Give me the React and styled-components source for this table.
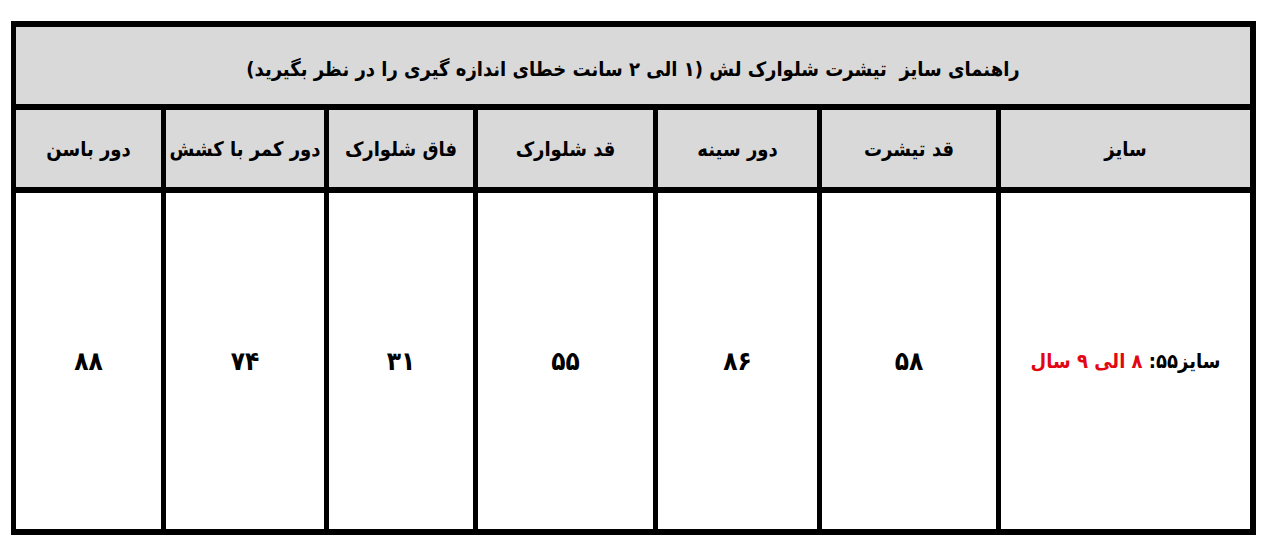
import React from "react";
import styled, { createGlobalStyle } from "styled-components";

const GlobalStyle = createGlobalStyle`
  html, body {
    margin: 0;
    padding: 0;
    background: #fff;
  }
  body {
    font-family: "DejaVu Sans Condensed", "DejaVu Sans", sans-serif;
    font-stretch: condensed;
  }
`;

const Page = styled.div`
  padding: 21px 0 0 11px;
`;

const SizeTable = styled.div`
  direction: rtl;
  display: grid;
  grid-template-columns: 249px 174px 159px 175px 144px 158px 145px;
  grid-template-rows: 77px 77px 336px;
  column-gap: 5px;
  row-gap: 6px;
  padding: 6px 6px 6px 5px;
  width: max-content;
  background: #000;
`;

const Cell = styled.div`
  display: flex;
  align-items: center;
  justify-content: center;
  overflow: hidden;
  background: ${({ $head }) => ($head ? "#d9d9d9" : "#fff")};
  color: #000;
  font-weight: 700;
  font-size: ${({ $num }) => ($num ? "26px" : "20px")};
  white-space: nowrap;
`;

const TitleCell = styled(Cell)`
  grid-column: 1 / -1;
  padding-top: 6px;
`;

const Red = styled.span`
  color: #e30613;
`;

const headers = [
  "سایز",
  "قد تیشرت",
  "دور سینه",
  "قد شلوارک",
  "فاق شلوارک",
  "دور کمر با کشش",
  "دور باسن",
];

const values = ["۵۸", "۸۶", "۵۵", "۳۱", "۷۴", "۸۸"];

export default function App() {
  return (
    <Page>
      <GlobalStyle />
      <SizeTable>
        <TitleCell $head>
          راهنمای سایز&nbsp; تیشرت شلوارک لش (۱ الی ۲ سانت خطای اندازه گیری را در نظر بگیرید)
        </TitleCell>
        {headers.map((h) => (
          <Cell $head key={h}>
            {h}
          </Cell>
        ))}
        <Cell>
          سایز۵۵:&nbsp;<Red>۸ الی ۹ سال</Red>
        </Cell>
        {values.map((v, i) => (
          <Cell $num key={i}>
            {v}
          </Cell>
        ))}
      </SizeTable>
    </Page>
  );
}
